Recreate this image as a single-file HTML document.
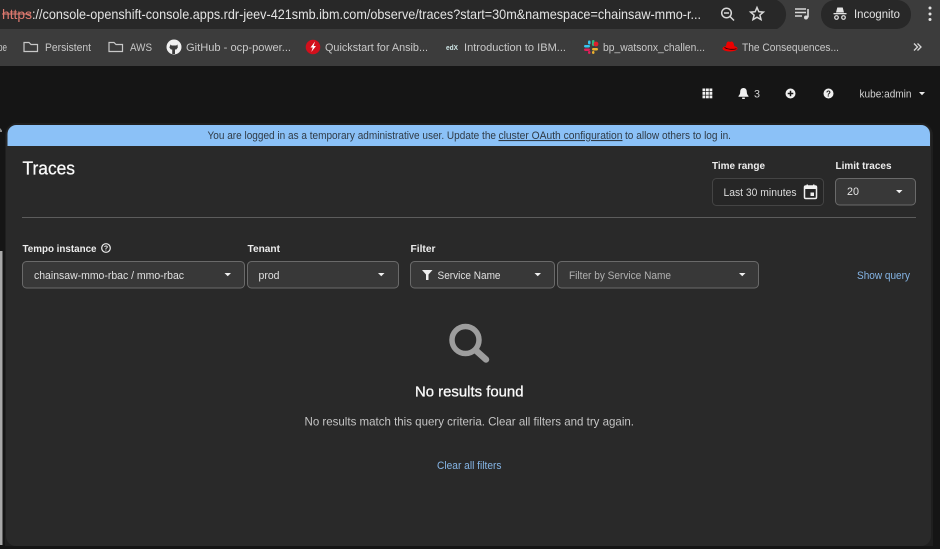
<!DOCTYPE html>
<html><head><meta charset="utf-8"><style>
html,body{margin:0;padding:0;background:#151515;width:940px;height:549px;overflow:hidden}
svg{display:block;position:absolute;left:0;top:0}
text{font-family:"Liberation Sans",sans-serif}
</style></head><body>
<svg width="940" height="549" viewBox="0 0 940 549" xmlns="http://www.w3.org/2000/svg">
<rect width="940" height="549" fill="#151515"/>
<!-- chrome -->
<rect width="940" height="29" fill="#3c3c3c"/>
<path d="M0 0H777V0A14 14 0 0 1 763 29H0Z" fill="#282828"/>
<rect x="821" y="0" width="90" height="29" rx="14" fill="#282828"/>
<rect y="29" width="940" height="37" fill="#3c3c3c"/>
<rect y="66" width="940" height="483" fill="#151515"/>
<text x="2" y="19" font-size="14" fill="#e07a70" textLength="30" lengthAdjust="spacingAndGlyphs">https</text>
<rect x="2" y="13.5" width="29" height="1" fill="#e07a70"/>
<text x="32" y="19" font-size="14" fill="#e3e3e3" textLength="669" lengthAdjust="spacingAndGlyphs">://console-openshift-console.apps.rdr-jeev-421smb.ibm.com/observe/traces?start=30m&amp;namespace=chainsaw-mmo-r...</text>
<!-- zoom icon -->
<g fill="none" stroke="#d8d8d8" stroke-width="1.5"><circle cx="726.5" cy="13" r="4.8"/><path d="M730 16.5L734 20.5M724 13H729"/></g>
<path d="M757 7.5l1.8 4.2 4.6.4-3.5 3 1.1 4.5-4-2.4-4 2.4 1.1-4.5-3.500-3 4.600-.4z" fill="none" stroke="#d8d8d8" stroke-width="1.5"/>
<!-- media -->
<path d="M795 9h11M795 12.5h11M795 16h7" stroke="#d8d8d8" stroke-width="1.4"/>
<path d="M808 9v8.5" stroke="#d8d8d8" stroke-width="1.6"/><circle cx="806" cy="17.5" r="2" fill="#d8d8d8"/>
<!-- incognito -->
<g fill="#e3e3e3"><path d="M836 12.500l1.300-5h5.400l1.300 5z"/><rect x="833.500" y="13" width="13" height="1.300"/></g>
<g fill="none" stroke="#e3e3e3" stroke-width="1.200"><circle cx="836.500" cy="17.500" r="1.800"/><circle cx="843.500" cy="17.500" r="1.800"/></g>
<text x="854" y="18" font-size="11.500" fill="#e3e3e3" textLength="46" lengthAdjust="spacingAndGlyphs">Incognito</text>
<g fill="#e3e3e3"><circle cx="930" cy="8" r="1.500"/><circle cx="930" cy="14" r="1.500"/><circle cx="930" cy="19.500" r="1.500"/></g>
<!-- bookmarks -->
<g font-size="11" fill="#c8c8c8">
<text x="-2" y="51" textLength="9" lengthAdjust="spacingAndGlyphs">pe</text>
<text x="45" y="51" textLength="46" lengthAdjust="spacingAndGlyphs">Persistent</text>
<text x="130" y="51" textLength="22" lengthAdjust="spacingAndGlyphs">AWS</text>
<text x="186" y="51" textLength="105" lengthAdjust="spacingAndGlyphs">GitHub - ocp-power...</text>
<text x="325" y="51" textLength="103" lengthAdjust="spacingAndGlyphs">Quickstart for Ansib...</text>
<text x="464" y="51" textLength="102" lengthAdjust="spacingAndGlyphs">Introduction to IBM...</text>
<text x="603" y="51" textLength="102" lengthAdjust="spacingAndGlyphs">bp_watsonx_challen...</text>
<text x="742" y="51" textLength="97" lengthAdjust="spacingAndGlyphs">The Consequences...</text>
</g>
<g fill="none" stroke="#c8c8c8" stroke-width="1.200">
<path d="M24 42.500h5l2 2h6.500v7h-13.500z"/>
<path d="M109 42.500h5l2 2h6.500v7h-13.500z"/>
</g>
<circle cx="174" cy="47" r="7.500" fill="#f0f0f0"/>
<path d="M170.500 44.500l1.200 1h4.600l1.200-1 .3 3-1.500 2h-1.300v4.500h-2.800v-4.500h-1.300l-1.500-2z" fill="#3c3c3c"/>
<circle cx="313" cy="47" r="7.300" fill="#d2101c"/>
<path d="M315 41.500l-4.500 6h2.300l-1.500 4.500 4.700-6h-2.400z" fill="#fff"/>
<text x="446" y="50" font-size="7" font-weight="bold" fill="#cfe6e6" textLength="12" lengthAdjust="spacingAndGlyphs">edX</text>
<g>
<rect x="584" y="45" width="6" height="2.500" rx="1.200" fill="#36c5f0"/><rect x="588" y="40.500" width="2.500" height="4" rx="1.200" fill="#36c5f0"/>
<rect x="592" y="40" width="2.500" height="6" rx="1.200" fill="#2eb67d"/><circle cx="596" cy="44" r="2.400" fill="#e01e2a"/>
<rect x="592" y="48" width="6" height="2.500" rx="1.200" fill="#ecb22e"/><rect x="592" y="51" width="2.500" height="3" rx="1.200" fill="#ecb22e"/>
<rect x="584" y="48.500" width="6" height="2.500" rx="1.200" fill="#e01e5a"/><rect x="588" y="51" width="2.500" height="3" rx="1.200" fill="#e01e5a"/>
</g>
<ellipse cx="730" cy="48.500" rx="7.500" ry="3" fill="#e00"/>
<path d="M726 46c.5-3 1-4.500 2.500-4.500 1 0 1 .4 1.500.4s.8-.4 1.500-.4c1.500 0 2.200 1.500 2.800 4.500z" fill="#e00"/>
<path d="M724.500 47.500c3 2 8 2.300 12 1.200" stroke="#200" stroke-width=".8" fill="none"/>
<path d="M914 43.500l3.500 3.500-3.500 3.500M917.500 43.500l3.500 3.500-3.500 3.500" fill="none" stroke="#d8d8d8" stroke-width="1.300"/>
<!-- masthead -->
<g fill="#f0f0f0">
<rect x="702.500" y="88.500" width="2.800" height="2.800"/><rect x="706" y="88.500" width="2.800" height="2.800"/><rect x="709.500" y="88.500" width="2.800" height="2.800"/>
<rect x="702.500" y="92" width="2.800" height="2.800"/><rect x="706" y="92" width="2.800" height="2.800"/><rect x="709.500" y="92" width="2.800" height="2.800"/>
<rect x="702.500" y="95.500" width="2.800" height="2.800"/><rect x="706" y="95.500" width="2.800" height="2.800"/><rect x="709.500" y="95.500" width="2.800" height="2.800"/>
<path d="M743.500 88c2.500 0 3.300 2 3.300 4 0 2 .7 2.800 1.700 4v.8h-10v-.8c1-1.200 1.700-2 1.700-4 0-2 .8-4 3.300-4z"/><rect x="742" y="97.500" width="3" height="1.500" rx=".7"/>
<circle cx="790.500" cy="93.500" r="5"/>
<circle cx="828.500" cy="93.500" r="5"/>
</g>
<path d="M787.700 93.500h5.600M790.500 90.700v5.600" stroke="#151515" stroke-width="1.500"/>
<text x="828.500" y="96.500" font-size="8" font-weight="bold" text-anchor="middle" fill="#151515">?</text>
<text x="754" y="97.500" font-size="11" fill="#d2d2d2" textLength="6" lengthAdjust="spacingAndGlyphs">3</text>
<text x="859.500" y="97.500" font-size="11" fill="#d2d2d2" textLength="52" lengthAdjust="spacingAndGlyphs">kube:admin</text>
<path d="M919 92h6l-3 3.200z" fill="#e8e8e8"/>
<!-- left scrollbar -->
<rect x="0" y="251" width="2.500" height="294" fill="#a8a8a8"/>
<path d="M0 128l2 2.500v1.500H0z" fill="#8a8a8a"/>
<!-- card -->
<path d="M5 135a12 12 0 0 1 12-12H921a12 12 0 0 1 12 12V549H5Z" fill="#1f1f1f"/>
<path d="M6 135a10 10 0 0 1 10-10H922a9 9 0 0 1 9 9V536a10 10 0 0 1-10 10H16a10 10 0 0 1-10-10Z" fill="#292929"/>
<rect x="0" y="546" width="940" height="3" fill="#151515"/>
<path d="M7.500 146V134a9 9 0 0 1 9-9H921a9 9 0 0 1 9 9V146Z" fill="#8bc1f7"/>
<text x="207.500" y="139" font-size="11" fill="#2f3a45" textLength="288.500" lengthAdjust="spacingAndGlyphs">You are logged in as a temporary administrative user. Update the</text>
<text x="498.500" y="139" font-size="11" fill="#2f3a45" textLength="124" lengthAdjust="spacingAndGlyphs" text-decoration="underline">cluster OAuth configuration</text>
<text x="625" y="139" font-size="11" fill="#2f3a45" textLength="106" lengthAdjust="spacingAndGlyphs">to allow others to log in.</text>
<text x="22.500" y="174.500" font-size="18" fill="#fafafa" stroke="#fafafa" stroke-width=".25" textLength="52.500" lengthAdjust="spacingAndGlyphs">Traces</text>
<text x="712" y="169" font-size="10.500" font-weight="bold" fill="#ededed" textLength="53" lengthAdjust="spacingAndGlyphs">Time range</text>
<text x="835.500" y="169" font-size="10.500" font-weight="bold" fill="#ededed" textLength="56" lengthAdjust="spacingAndGlyphs">Limit traces</text>
<rect x="712.500" y="178.500" width="111" height="27" rx="4" fill="#262626" stroke="#444"/>
<text x="723.500" y="196" font-size="11" fill="#dcdcdc" textLength="73" lengthAdjust="spacingAndGlyphs">Last 30 minutes</text>
<rect x="804.500" y="186" width="12" height="12.500" rx="1.300" fill="none" stroke="#f0f0f0" stroke-width="1.500"/>
<rect x="804" y="186" width="13" height="3" fill="#f0f0f0"/><rect x="806.500" y="184.500" width="1.500" height="2" fill="#f0f0f0"/><rect x="813" y="184.500" width="1.500" height="2" fill="#f0f0f0"/>
<rect x="810.500" y="192.500" width="3.500" height="3.500" fill="#f0f0f0"/>
<rect x="835.500" y="178.500" width="80" height="26.500" rx="4" fill="#383838" stroke="#6a6a6a"/>
<text x="847" y="195" font-size="11" fill="#e6e6e6" textLength="12" lengthAdjust="spacingAndGlyphs">20</text>
<path d="M896 190h6.500l-3.250 3.300z" fill="#f0f0f0"/>
<rect x="22" y="217" width="894" height="1" fill="#5c5c5c"/>
<!-- filters -->
<g font-size="10.500" font-weight="bold" fill="#ededed">
<text x="22.500" y="252" textLength="74" lengthAdjust="spacingAndGlyphs">Tempo instance</text>
<text x="247.500" y="252" textLength="32.500" lengthAdjust="spacingAndGlyphs">Tenant</text>
<text x="410.500" y="252" textLength="25" lengthAdjust="spacingAndGlyphs">Filter</text>
</g>
<circle cx="106" cy="248" r="4.300" fill="none" stroke="#ededed" stroke-width="1.200"/>
<text x="106" y="250.700" font-size="7" font-weight="bold" text-anchor="middle" fill="#ededed">?</text>
<g fill="#383838" stroke="#6a6a6a">
<rect x="22.500" y="261.500" width="222" height="26.500" rx="4"/>
<rect x="247.500" y="261.500" width="151" height="26.500" rx="4"/>
<rect x="410.500" y="261.500" width="144" height="26.500" rx="4"/>
<rect x="557.500" y="261.500" width="201" height="26.500" rx="4"/>
</g>
<g font-size="11" fill="#e0e0e0">
<text x="34" y="279" textLength="150" lengthAdjust="spacingAndGlyphs">chainsaw-mmo-rbac / mmo-rbac</text>
<text x="258.500" y="279" textLength="21" lengthAdjust="spacingAndGlyphs">prod</text>
<text x="437.500" y="279" textLength="63" lengthAdjust="spacingAndGlyphs">Service Name</text>
<text x="569" y="279" fill="#b0b0b0" textLength="102" lengthAdjust="spacingAndGlyphs">Filter by Service Name</text>
</g>
<path d="M422 270h10.500l-4 4.500v5.500h-2.500v-5.500z" fill="#f0f0f0"/>
<g fill="#f0f0f0">
<path d="M224.500 273h6.500l-3.250 3.300z"/>
<path d="M378 273h6.500l-3.250 3.300z"/>
<path d="M534.500 273h6.500l-3.250 3.300z"/>
<path d="M739 273h6.500l-3.250 3.300z"/>
</g>
<text x="857" y="279" font-size="11" fill="#85b5e6" textLength="53" lengthAdjust="spacingAndGlyphs">Show query</text>
<!-- empty state -->
<circle cx="465.500" cy="340" r="13.500" fill="none" stroke="#9d9d9d" stroke-width="5.500"/>
<path d="M476.500 351L486 359.500" stroke="#9d9d9d" stroke-width="6.500" stroke-linecap="round" fill="none"/>
<text x="415" y="396.500" font-size="15" fill="#fafafa" stroke="#fafafa" stroke-width=".3" textLength="108.500" lengthAdjust="spacingAndGlyphs">No results found</text>
<text x="304.500" y="425.500" font-size="12" fill="#c4c4c4" textLength="329.500" lengthAdjust="spacingAndGlyphs">No results match this query criteria. Clear all filters and try again.</text>
<text x="437" y="469" font-size="11" fill="#85b5e6" textLength="64.500" lengthAdjust="spacingAndGlyphs">Clear all filters</text>
</svg>
</body></html>
